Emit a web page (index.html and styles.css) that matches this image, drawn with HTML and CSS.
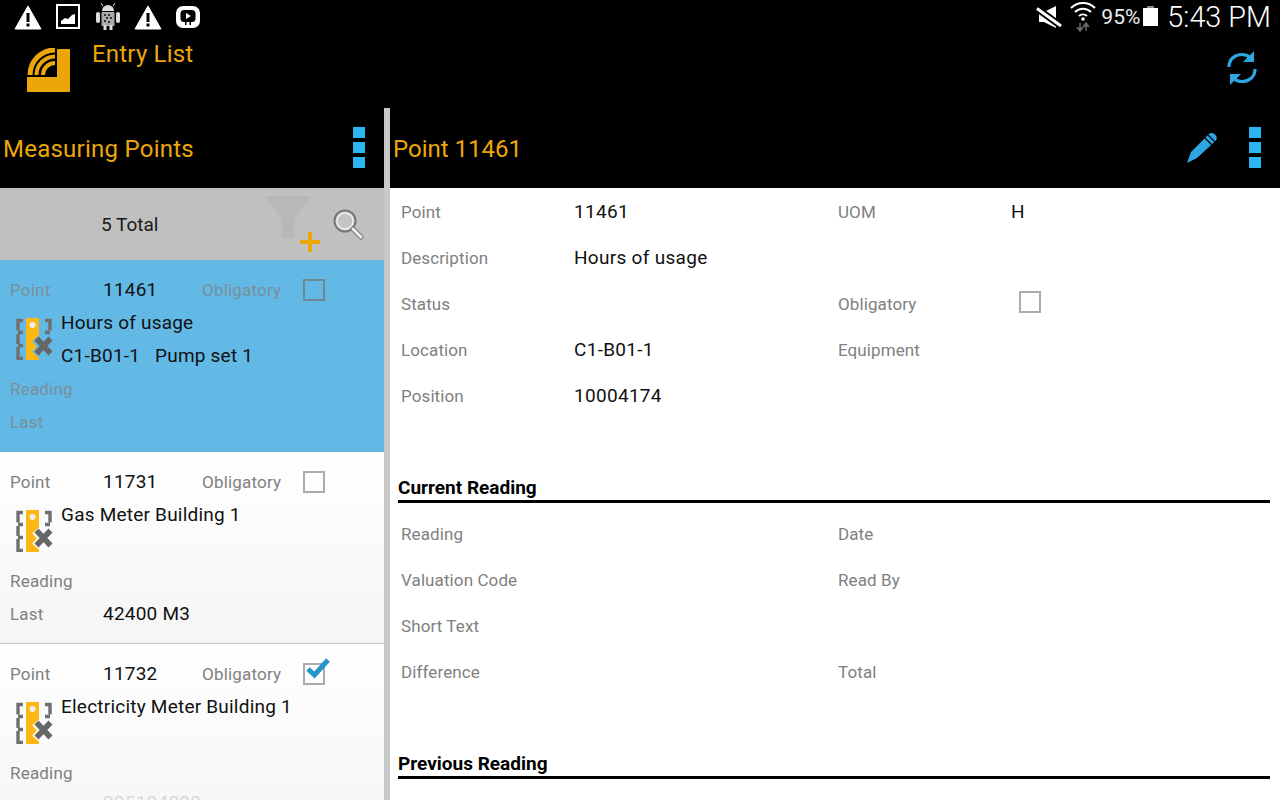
FILE: index.html
```
<!DOCTYPE html>
<html lang="en">
<head>
<meta charset="utf-8">
<title>Entry List</title>
<link rel="stylesheet" href="styles.css">
</head>
<body>
<svg class="defs" width="0" height="0" aria-hidden="true">
  <defs>
    <mask id="xcut" maskUnits="userSpaceOnUse" x="0" y="0" width="37" height="42">
      <rect width="37" height="42" fill="#fff"/>
      <path d="M20 20 35 37M35 20 20 37" stroke="#000" stroke-width="10"/>
    </mask>
    <symbol id="meter" viewBox="0 0 37 42">
      <path d="M7 2.500H2v10M2 16v10M2 29v11.500h5M7 14.500H2M7 27.500H2M29 2.500h5v10M29 14.500h5" fill="none" stroke="#6f6f6f" stroke-width="3.400"/>
      <rect x="10" y="0" width="13" height="42" fill="#fdb813" mask="url(#xcut)"/>
      <circle cx="16.500" cy="7" r="3" fill="#eee"/>
      <path d="M20.500 20.500 34.500 35.500M34.500 20.500 20.500 35.500" stroke="#666" stroke-width="5.500"/>
    </symbol>
    <symbol id="warn" viewBox="0 0 28 28">
      <path d="M14 3 27 26H1Z" fill="#fff" stroke="#fff" stroke-linejoin="round"/>
      <rect x="12.500" y="10" width="3" height="9" fill="#000"/>
      <rect x="12.500" y="20.500" width="3" height="3" fill="#000"/>
    </symbol>
  </defs>
</svg>
<div class="app">
  <header class="status">
    <div class="status-left">
      <svg class="si" width="28" height="28"><use href="#warn"/></svg>
      <svg class="si" width="24" height="25" viewBox="0 0 24 25"><rect x="1" y="1" width="22" height="23" fill="none" stroke="#fff" stroke-width="2"/><path d="M5 20v-3l4-3 3 1 4-4 3-1v10Z" fill="#fff"/></svg>
      <svg class="si" width="24" height="27" viewBox="0 0 24 27"><path d="M6 8a6 6 0 0 1 12 0Z" fill="#ddd"/><path d="M7 3 5 0M17 3l2-3" stroke="#ddd"/><rect x="5.500" y="9" width="13" height="14" rx="1" fill="#aaa"/><rect x="0" y="9" width="4" height="11" rx="2" fill="#ddd"/><rect x="20" y="9" width="4" height="11" rx="2" fill="#ddd"/><rect x="7.500" y="22" width="3" height="5" fill="#ddd"/><rect x="13.500" y="22" width="3" height="5" fill="#ddd"/><path d="M8 11h2v2H8ZM12 11h2v2h-2ZM10 14h2v2h-2ZM14 14h2v2h-2ZM8 17h2v2H8ZM12 18h2v2h-2Z" fill="#333"/></svg>
      <svg class="si" width="28" height="28"><use href="#warn"/></svg>
      <svg class="si" width="24" height="24" viewBox="0 0 24 24"><path d="M7 1h10a7 7 0 0 1 7 7v8a7 7 0 0 1-7 7H7a7 7 0 0 1-7-7V8a7 7 0 0 1 7-7Z" fill="#fff"/><path d="M8 5h8a3.500 3.500 0 0 1 3.500 3.500v5A3.500 3.500 0 0 1 16 17h-1v3h-1.500v-3h-3v3H9v-3H8a3.500 3.500 0 0 1-3.500-3.500v-5A3.500 3.500 0 0 1 8 5Z" fill="#000"/><path d="M10 8v6l5-3Z" fill="#fff"/></svg>
    </div>
    <div class="status-right">
      <svg class="mute" width="26" height="24" viewBox="0 0 26 24"><path d="M3 7h5l12-6v22l-12-6H3Z" fill="#fff"/><path d="M1 3.500 25 21" stroke="#000" stroke-width="7"/><path d="M1 3.500 25 21" stroke="#fff" stroke-width="3"/></svg>
      <svg class="wifi" width="26" height="30" viewBox="0 0 26 30"><g fill="none" stroke="#fff" stroke-width="2"><path d="M1 6a17 17 0 0 1 24 0"/><path d="M5 10a11.500 11.500 0 0 1 16 0"/><path d="M9 14a6 6 0 0 1 8 0"/></g><circle cx="13" cy="17" r="1.800" fill="#fff"/><path d="M10 21v8M7.500 26l2.500 3 2.500-3ZM16 29v-8M13.500 24l2.500-3 2.500 3Z" fill="#666" stroke="#666" stroke-width="1.500"/></svg>
      <span class="pct">95%</span>
      <span class="battery"></span>
      <span class="clock">5:43 PM</span>
    </div>
  </header>

  <div class="actionbar">
    <svg class="logo" width="44" height="44" viewBox="0 0 44 44"><path d="M31 2a1 1 0 0 1 1-1h11a1 1 0 0 1 1 1v41a1 1 0 0 1-1 1H2a1 1 0 0 1-1-1V29h30Z" fill="#eba70a"/><g fill="none" stroke="#eba70a"><path d="M4 27A25 25 0 0 1 29 2" stroke-width="5"/><path d="M10.500 27A18.500 18.500 0 0 1 29 8.500" stroke-width="4"/><path d="M17 27A12 12 0 0 1 29 15" stroke-width="4"/></g></svg>
    <h1 class="app-title">Entry List</h1>
    <svg class="sync" width="32" height="34" viewBox="0 0 32 34"><g fill="none" stroke="#2ea6e2" stroke-width="3.200"><path d="M3 16C3 8 9 3.500 16 3.500c3 0 6 1 8 3"/><path d="M29 18c0 8-6 12.500-13 12.500-3 0-6-1-8-3"/></g><path d="M28 0v11H17Z" fill="#2ea6e2"/><path d="M4 34V23h11Z" fill="#2ea6e2"/></svg>
  </div>

  <div class="panes">
    <aside class="left">
      <div class="pane-head">
        <span class="pane-title wide">Measuring Points</span>
        <span class="dots"><i></i><i></i><i></i></span>
      </div>
      <div class="toolbar">
        <span class="total">5 Total</span>
        <svg class="filter" width="62" height="66" viewBox="0 0 62 66"><path d="M4 8h48L34 30v20h-12V30Z" fill="#b8b8b8"/><path d="M40 54h20M50 44v20" stroke="#eba70a" stroke-width="4"/></svg>
        <svg class="search" width="32" height="32" viewBox="0 0 32 32"><circle cx="13" cy="13" r="10.500" fill="#d0d0d0" stroke="#777" stroke-width="2"/><circle cx="13" cy="13" r="8" fill="#c4c4c4" stroke="#eee" stroke-width="1.500"/><path d="M21 21l8 8" stroke="#777" stroke-width="5" stroke-linecap="round"/><path d="M21 21l8 8" stroke="#eee" stroke-width="3" stroke-linecap="round"/></svg>
      </div>

      <article class="item selected">
        <div class="row"><span class="k">Point</span><span class="v pt">11461</span><span class="k ob">Obligatory</span><span class="box"></span></div>
        <div class="mid">
          <svg class="meter" width="37" height="42"><use href="#meter"/></svg>
          <div class="lines"><div class="v">Hours of usage</div><div class="v">C1-B01-1 &nbsp; Pump set 1</div></div>
        </div>
        <div class="row"><span class="k">Reading</span></div>
        <div class="row"><span class="k">Last</span></div>
      </article>

      <article class="item">
        <div class="row"><span class="k">Point</span><span class="v pt">11731</span><span class="k ob">Obligatory</span><span class="box"></span></div>
        <div class="mid">
          <svg class="meter" width="37" height="42"><use href="#meter"/></svg>
          <div class="lines"><div class="v">Gas Meter Building 1</div><div class="v"></div></div>
        </div>
        <div class="row"><span class="k">Reading</span></div>
        <div class="row"><span class="k">Last</span><span class="v pt">42400 M3</span></div>
      </article>

      <article class="item">
        <div class="row"><span class="k">Point</span><span class="v pt">11732</span><span class="k ob">Obligatory</span><span class="box checked"><svg class="tick" width="28" height="24" viewBox="0 0 28 24"><path d="M4 12l6.500 6L24 3" fill="none" stroke="#2596c8" stroke-width="5"/></svg></span></div>
        <div class="mid">
          <svg class="meter" width="37" height="42"><use href="#meter"/></svg>
          <div class="lines"><div class="v">Electricity Meter Building 1</div><div class="v"></div></div>
        </div>
        <div class="row"><span class="k">Reading</span></div>
        <div class="row faded"><span class="k"></span><span class="v pt">235104000</span></div>
      </article>
    </aside>

    <main class="right">
      <div class="pane-head right-head">
        <span class="pane-title">Point 11461</span>
        <svg class="pencil" width="34" height="32" viewBox="0 0 34 32"><path d="M2 31l4-11L24 2c2-1.500 4-1.500 6 .5s2.500 4.500.5 6.500L12 26Z" fill="#2ea6e2"/><path d="M20 6l8 8M23 3l8 8" stroke="#000" stroke-width="1.200"/></svg>
        <span class="dots"><i></i><i></i><i></i></span>
      </div>
      <div class="detail">
        <dl class="grid">
          <dt>Point</dt><dd>11461</dd><dt>UOM</dt><dd>H</dd>
          <dt>Description</dt><dd>Hours of usage</dd><dt></dt><dd></dd>
          <dt>Status</dt><dd></dd><dt>Obligatory</dt><dd><span class="box detail-box"></span></dd>
          <dt>Location</dt><dd>C1-B01-1</dd><dt>Equipment</dt><dd></dd>
          <dt>Position</dt><dd>10004174</dd><dt></dt><dd></dd>
        </dl>
        <h2 class="section">Current Reading</h2>
        <dl class="grid">
          <dt>Reading</dt><dd></dd><dt>Date</dt><dd></dd>
          <dt>Valuation Code</dt><dd></dd><dt>Read By</dt><dd></dd>
          <dt>Short Text</dt><dd></dd><dt></dt><dd></dd>
          <dt>Difference</dt><dd></dd><dt>Total</dt><dd></dd>
        </dl>
        <h2 class="section">Previous Reading</h2>
      </div>
    </main>
  </div>
</div>
</body>
</html>
```
FILE: styles.css
```
* { box-sizing: border-box; }
html, body { margin: 0; padding: 0; }
body { width: 1280px; height: 800px; overflow: hidden; background: #000; font-family: Roboto, "Liberation Sans", sans-serif; }
.defs { display: block; height: 0; }
.app { width: 1280px; height: 800px; display: flex; flex-direction: column; overflow: hidden; }

.status { height: 33px; flex: none; display: flex; justify-content: space-between; align-items: center; background: #000; }
.status-left { display: flex; align-items: center; padding-left: 14px; gap: 14px; }
.si { display: block; }
.status-left .si:nth-child(2) { margin-right: 2px; }
.status-right { display: flex; align-items: center; color: #fff; padding-right: 9px; }
.mute { margin-right: 8px; }
.wifi { margin-right: 5px; }
.pct { font-size: 21px; margin-right: 3px; color: #eee; }
.battery { width: 15px; height: 18px; background: #fff; margin-right: 9px; position: relative; }
.battery::before { content: ""; position: absolute; left: 4px; top: -2px; width: 7px; height: 2px; background: #888; }
.clock { font-size: 28.800px; font-weight: 300; }

.actionbar { height: 75px; flex: none; display: flex; align-items: flex-start; background: #000; }
.logo { margin: 15px 0 0 26px; }
.app-title { margin: 5px 0 0 22px; font-size: 24px; line-height: 32px; font-weight: 400; color: #eba70a; letter-spacing: .2px; }
.sync { margin: 18px 22px 0 auto; }

.panes { flex: 1; display: flex; min-height: 0; }
.left { width: 390px; flex: none; border-right: 6px solid #c8c8c8; overflow: hidden; background: #fafafa; }
.right { flex: 1; display: flex; flex-direction: column; min-width: 0; background: #fff; }

.pane-head { height: 80px; background: #000; display: flex; align-items: center; padding: 0 19px 0 3px; }
.pane-title { font-size: 24px; color: #eba70a; flex: 1; padding-top: 2px; }
.pane-title.wide { letter-spacing: .25px; }
.dots { display: flex; flex-direction: column; gap: 4px; width: 12px; margin-top: -1px; }
.dots i { display: block; width: 12px; height: 11px; background: #2db4f3; }
.right-head { padding: 0 19px 0 3px; }
.pencil { margin-right: 30px; }

.toolbar { height: 72px; background: #c0c0c0; display: flex; align-items: center; position: relative; }
.total { font-size: 19px; color: #1a1a1a; margin: 0 0 0 101px; }
.filter { position: absolute; left: 260px; top: 0; }
.search { position: absolute; left: 332px; top: 20px; }

.item { height: 192px; padding-top: 13px; background: linear-gradient(#fff, #f5f5f5); border-bottom: 1px solid #c4c4c4; }
.item.selected { background: #62b9e6; border-bottom-color: #62b9e6; }
.row { height: 33px; display: flex; align-items: center; padding-left: 10px; }
.row.faded { margin-top: -3px; }
.row.faded .v { color: #d8d8d8; }
.k { font-size: 17px; color: #808080; width: 93px; flex: none; letter-spacing: .2px; }
.selected .k { color: #7a8f9c; }
.v { font-size: 19px; color: #111; letter-spacing: .22px; }
.pt { width: 99px; flex: none; white-space: nowrap; }
.k.ob { width: 101px; }
.box { display: block; width: 22px; height: 22px; border: 2px solid #ababab; position: relative; }
.selected .box { border-color: #6d8793; }
.tick { position: absolute; left: -1px; top: -8px; }
.detail-box { margin: -2px 0 0 8px; }
.mid { height: 66px; display: flex; padding-left: 16px; }
.meter { margin-top: 12px; flex: none; }
.lines { margin-left: 8px; }
.lines .v { height: 33px; line-height: 33px; white-space: nowrap; }

.detail { flex: 1; padding: 1px 10px 0 11px; overflow: hidden; }
.grid { display: grid; grid-template-columns: 173px 264px 173px 1fr; grid-auto-rows: 46px; margin: 0; align-items: center; }
.grid dt { font-size: 17px; color: #808080; letter-spacing: .1px; }
.grid dd { margin: 0; padding-bottom: 2px; font-size: 19px; color: #111; letter-spacing: .3px; }
.section { margin: 57px 0 8px -3px; padding-bottom: 2px; height: 27px; font-size: 19px; line-height: 24px; font-weight: 700; color: #000; border-bottom: 3px solid #000; }
```
